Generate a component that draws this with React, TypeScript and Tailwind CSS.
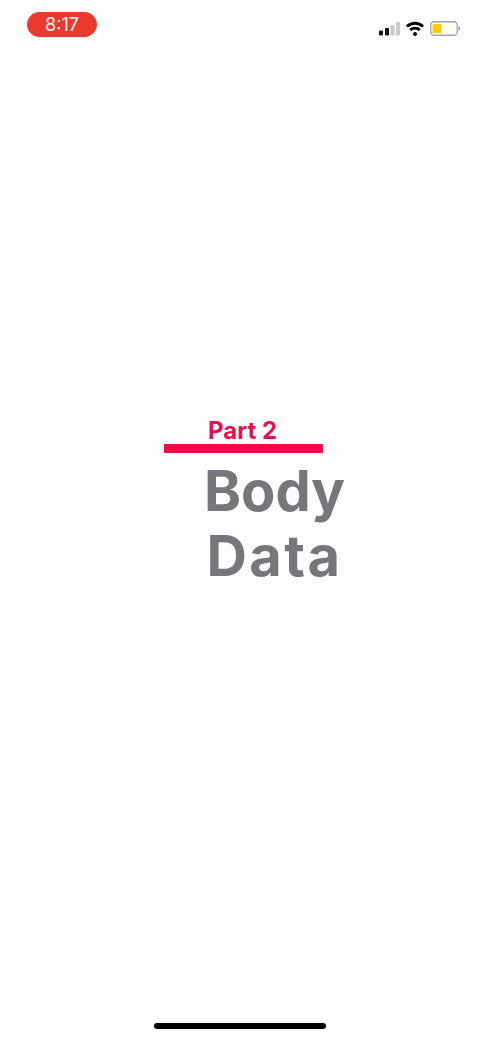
export default function App() {
  return (
    <div className="flex h-[1039px] w-[480px] flex-col overflow-hidden bg-[#fefdfe] font-['Inter',sans-serif]">
      <div className="flex items-start justify-between pl-[27px] pr-[20px] pt-3">
        <div className="flex h-[25px] w-[70px] items-center justify-center rounded-full bg-[#e93a30] text-[18px] text-[#fdf0ee]">
          8:17
        </div>
        <div className="mt-[9px] flex items-center gap-[6px]">
          <svg className="-mr-px" width="22" height="15" viewBox="0 0 22 15">
            <rect x="0" y="9.5" width="4" height="5" rx="1" fill="#111" />
            <rect x="6" y="7" width="4" height="7.5" rx="1" fill="#111" />
            <rect x="11.5" y="4" width="4" height="10.5" rx="1" fill="#c9c9c9" />
            <rect x="17" y="1" width="4" height="13.5" rx="1" fill="#c9c9c9" />
          </svg>
          <svg width="18" height="15" viewBox="0 0 18 15" fill="none" stroke="#000" strokeWidth="2.8">
            <path d="M1 5.5 A11.5 11.5 0 0 1 17 5.5" />
            <path d="M4.2 9 A7 7 0 0 1 13.8 9" />
            <circle cx="9" cy="13" r="2" fill="#000" stroke="none" />
          </svg>
          <svg width="30" height="15" viewBox="0 0 30 15">
            <rect x="0.75" y="0.75" width="26.5" height="13.5" rx="3.5" fill="#fffdf2" stroke="#a5a5a5" strokeWidth="1.3" />
            <rect x="2.5" y="3" width="9" height="9" rx="1" fill="#fdc90f" />
            <rect x="28.6" y="5.5" width="1.2" height="4" rx="0.6" fill="#8a8a8a" />
          </svg>
        </div>
      </div>

      <div className="ml-[164px] mt-[379px] flex w-[221px] flex-col">
        <div className="pl-[44px] text-[24px] font-bold leading-[30px] text-[#e01350]">Part 2</div>
        <div className="mt-[-2px] h-[9px] w-[159px] bg-[#ee0b45]" />
        <div className="mt-[6px] text-center text-[56px] font-bold leading-[65px] text-[#77767a]">
          <div>Body</div>
          <div className="tracking-[2.5px]">Data</div>
        </div>
      </div>

      <div className="mt-auto flex justify-center pb-[10px]">
        <div className="h-[6px] w-[172px] rounded-full bg-black" />
      </div>
    </div>
  );
}
